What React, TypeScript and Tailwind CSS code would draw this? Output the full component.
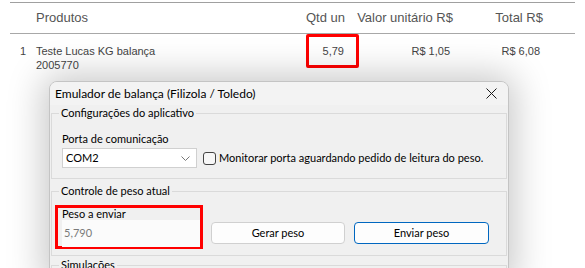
import React from "react";

export default function App() {
  return (
    <div className="relative h-[268px] w-[585px] overflow-hidden bg-white font-['Liberation_Sans',Arial,sans-serif]">
      {/* Table */}
      <div className="mx-[10px] mt-[2px] border-t border-[#a0a0a0]">
        <div className="flex h-[31px] items-center border-b border-[#a8a8a8] pl-[26px] pr-[32px] text-[13px] text-[#555]">
          <div className="flex-1">Produtos</div>
          <div className="w-[60px] text-right">Qtd un</div>
          <div className="w-[108px] text-right">Valor unitário R$</div>
          <div className="w-[90px] text-right">Total R$</div>
        </div>
        <div className="flex pl-[10px] pr-[35px] pt-[10px] text-[11px] leading-[14px] text-[#444]">
          <div className="w-[16px]">1</div>
          <div className="flex-1">
            <div>Teste Lucas KG balança</div>
            <div>2005770</div>
          </div>
          <div className="w-[60px] text-right">5,79</div>
          <div className="w-[106px] text-right">R$ 1,05</div>
          <div className="w-[90px] text-right">R$ 6,08</div>
        </div>
      </div>
      {/* highlight on qtd */}
      <div className="absolute left-[306px] top-[34px] h-[34px] w-[53px] rounded-[2px] border-[3px] border-[#ff0000]" />

      {/* Dialog window */}
      <div className="absolute left-[49px] top-[81px] h-[200px] w-[460px] overflow-hidden rounded-t-[8px] border border-[#c4c4c4] bg-[#f0f0f0] font-['Lato',sans-serif] text-[11px] text-black shadow-[0_0_36px_6px_rgba(0,0,0,0.22)]">
        <div className="flex h-[23px] items-center justify-between bg-[#f3f3f3] pl-[5px] pr-[10px]">
          <span className="text-[12px] leading-[16px]">Emulador de balança (Filizola / Toledo)</span>
          <svg width="11" height="11" viewBox="0 0 11 11" className="mr-[1px]">
            <path d="M0.5 0.5 L10.5 10.5 M10.5 0.5 L0.5 10.5" stroke="#1a1a1a" strokeWidth="1" />
          </svg>
        </div>
        <div className="px-[1px]">
          <fieldset className="border border-[#dadada]">
            <legend className="ml-[7px] px-[2px] leading-[16px]">Configurações do aplicativo</legend>
            <div className="pb-[10px] pl-[10px]">
              <div className="mt-[10px] leading-[16px]">Porta de comunicação</div>
              <div className="mt-[1px] flex items-center">
                <div className="flex h-[20px] w-[135px] items-center justify-between border border-[#d0d0d0] bg-white pl-[3px] pr-[6px]">
                  <span className="leading-[16px]">COM2</span>
                  <svg width="9" height="5" viewBox="0 0 9 5">
                    <path d="M0.5 0.5 L4.5 4.5 L8.5 0.5" stroke="#777" strokeWidth="1" fill="none" />
                  </svg>
                </div>
                <div className="ml-[6px] h-[13px] w-[13px] rounded-[3px] border border-[#444] bg-[#f7f7f7]" />
                <span className="ml-[3px] whitespace-nowrap leading-[16px]">Monitorar porta aguardando pedido de leitura do peso.</span>
              </div>
            </div>
          </fieldset>
          <fieldset className="mt-[4px] border border-[#dadada]">
            <legend className="ml-[7px] px-[2px] leading-[16px]">Controle de peso atual</legend>
            <div className="mt-[6px] flex items-end pb-[6px] pl-[3px]">
              <div className="h-[44px] w-[148px] border-[3px] border-[#ff0000] pl-[4px]">
                <div className="mt-[-1px] leading-[14px]">Peso a enviar</div>
                <div className="mt-[-1px] flex h-[27px] w-[138px] items-center bg-[#fbfbfb] pl-[2px] text-[#7a7a7a]">5,790</div>
              </div>
              <button className="mb-[5px] ml-[8px] h-[22px] w-[134px] rounded-[4px] border border-[#d0d0d0] bg-[#fdfdfd] text-[11px] leading-[16px]">
                Gerar peso
              </button>
              <button className="mb-[5px] ml-[9px] h-[22px] w-[135px] rounded-[4px] border border-[#0067c0] bg-[#fdfdfd] text-[11px] leading-[16px]">
                Enviar peso
              </button>
            </div>
          </fieldset>
          <fieldset className="mt-[1px] h-[40px] border border-[#dadada]">
            <legend className="ml-[7px] px-[2px] leading-[16px]">Simulações</legend>
          </fieldset>
        </div>
      </div>
    </div>
  );
}
